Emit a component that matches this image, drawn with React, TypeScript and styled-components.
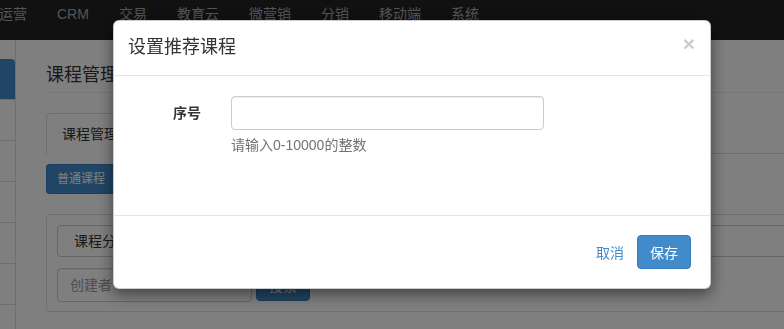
import React from 'react';
import styled, {createGlobalStyle} from 'styled-components';

const GlobalStyle = createGlobalStyle`
  html, body {
    margin: 0;
    padding: 0;
    background: #fff;
    overflow: hidden;
  }
  body {
    font-family: "Liberation Sans", "Noto Sans CJK SC", sans-serif;
    font-size: 14px;
    color: #333;
  }
  * { box-sizing: border-box; }
`;

const Navbar = styled.header`
  height: 40px;
  background: #222;
  display: flex;
  padding-top: 4px;
  overflow: hidden;
`;

const NavItem = styled.a`
  padding: 0 15px;
  line-height: 20px;
  color: #aaa;
  white-space: nowrap;
  text-decoration: none;
  &:first-child { margin-left: -16px; }
`;

const Main = styled.div`
  display: flex;
  width: 100%;
  overflow: hidden;
`;

const Sidebar = styled.nav`
  flex: 0 0 16px;
  border-right: 1px solid #ddd;
  padding-top: 19px;
  height: 289px;
`;

const SideItem = styled.div<{ $active?: boolean }>`
  height: 41px;
  border-bottom: 1px solid #ddd;
  background: ${p => (p.$active ? '#428bca' : 'transparent')};
  border-top-right-radius: ${p => (p.$active ? '4px' : '0')};
`;

const Content = styled.section`
  flex: 0 0 900px;
  margin-left: 30px;
`;

const PageTitle = styled.h3`
  margin: 22px 0 0;
  font-size: 18px;
  font-weight: normal;
  line-height: 26px;
  padding-bottom: 4px;
  border-bottom: 1px solid #eee;
`;

const Tabs = styled.div`
  margin-top: 20px;
  display: flex;
  border-bottom: 1px solid #ddd;
`;

const Tab = styled.div`
  padding: 10px 15px;
  line-height: 20px;
  border: 1px solid #ddd;
  border-bottom: none;
  border-radius: 4px 4px 0 0;
  margin-bottom: -1px;
  background: #fff;
`;

const SmallButton = styled.button`
  margin-top: 10px;
  padding: 5px 10px;
  font: inherit;
  font-size: 12px;
  line-height: 18px;
  color: #fff;
  background: #428bca;
  border: 1px solid #357ebd;
  border-radius: 3px;
`;

const FilterPanel = styled.div`
  margin-top: 20px;
  border: 1px solid #ddd;
  border-radius: 4px;
  padding: 10px 10px 9px;
  display: flex;
  flex-direction: column;
  gap: 11px;
`;

const SelectBox = styled.div`
  height: 32px;
  border: 1px solid #ccc;
  border-radius: 4px;
  padding-left: 16px;
  line-height: 30px;
`;

const SearchRow = styled.div`
  display: flex;
  align-items: center;
  gap: 4px;
`;

const TextInput = styled.input<{ $width: number }>`
  width: ${p => p.$width}px;
  height: 34px;
  padding: 6px 12px;
  font: inherit;
  font-size: 14px;
  color: #555;
  border: 1px solid #ccc;
  border-radius: 4px;
  box-shadow: inset 0 1px 1px rgba(0, 0, 0, 0.075);
  background: #fff;
  outline: none;
  &::placeholder { color: #999; }
`;

const PrimaryButton = styled.button<{ $tall?: boolean }>`
  height: ${p => (p.$tall ? 34 : 32)}px;
  padding: 0 12px;
  font: inherit;
  font-size: 14px;
  color: #fff;
  background: #428bca;
  border: 1px solid #357ebd;
  border-radius: 4px;
`;

const Backdrop = styled.div`
  position: fixed;
  inset: 0;
  background: rgba(0, 0, 0, 0.5);
`;

const ModalWrap = styled.div`
  position: fixed;
  inset: 0;
  padding: 20px 0 0 113px;
`;

const Modal = styled.div`
  width: 598px;
  background: #fff;
  border: 1px solid rgba(0, 0, 0, 0.2);
  border-radius: 6px;
  box-shadow: 0 5px 15px rgba(0, 0, 0, 0.5);
`;

const ModalHeader = styled.div`
  display: flex;
  justify-content: space-between;
  align-items: flex-start;
  padding: 14px 15px 15px 14px;
  border-bottom: 1px solid #e5e5e5;
`;

const ModalTitle = styled.h4`
  margin: 0;
  font-size: 18px;
  font-weight: normal;
  line-height: 25px;
`;

const Close = styled.button`
  border: 0;
  background: none;
  padding: 0;
  margin-top: -4px;
  font-family: "Liberation Sans", sans-serif;
  font-size: 21px;
  font-weight: bold;
  line-height: 25px;
  color: #000;
  opacity: 0.2;
`;

const ModalBody = styled.div`
  padding: 20px 20px 60px;
`;

const FormRow = styled.div`
  display: grid;
  grid-template-columns: 67px 313px;
  column-gap: 30px;
`;

const Label = styled.label`
  padding-top: 7px;
  line-height: 20px;
  font-weight: bold;
  text-align: right;
`;

const Help = styled.div`
  margin-top: 5px;
  line-height: 20px;
  color: #737373;
`;

const ModalFooter = styled.div`
  display: flex;
  justify-content: flex-end;
  align-items: center;
  gap: 13px;
  padding: 19px 19px 19px;
  border-top: 1px solid #e5e5e5;
`;

const LinkButton = styled.button`
  border: 0;
  background: none;
  padding: 0;
  font: inherit;
  font-size: 14px;
  color: #428bca;
`;

const navItems = ['运营', 'CRM', '交易', '教育云', '微营销', '分销', '移动端', '系统'];

export default function App() {
  return (
    <>
      <GlobalStyle />
      <Navbar>
        {navItems.map(n => (
          <NavItem key={n}>{n}</NavItem>
        ))}
      </Navbar>
      <Main>
        <Sidebar>
          <SideItem $active />
          <SideItem />
          <SideItem />
          <SideItem />
          <SideItem />
          <SideItem />
        </Sidebar>
        <Content>
          <PageTitle>课程管理</PageTitle>
          <Tabs>
            <Tab>课程管理</Tab>
          </Tabs>
          <SmallButton>普通课程</SmallButton>
          <FilterPanel>
            <SelectBox>课程分类</SelectBox>
            <SearchRow>
              <TextInput $width={195} placeholder="创建者" />
              <PrimaryButton>搜索</PrimaryButton>
            </SearchRow>
          </FilterPanel>
        </Content>
      </Main>
      <Backdrop />
      <ModalWrap>
        <Modal>
          <ModalHeader>
            <ModalTitle>设置推荐课程</ModalTitle>
            <Close>×</Close>
          </ModalHeader>
          <ModalBody>
            <FormRow>
              <Label>序号</Label>
              <div>
                <TextInput $width={313} />
                <Help>请输入0-10000的整数</Help>
              </div>
            </FormRow>
          </ModalBody>
          <ModalFooter>
            <LinkButton>取消</LinkButton>
            <PrimaryButton $tall>保存</PrimaryButton>
          </ModalFooter>
        </Modal>
      </ModalWrap>
    </>
  );
}
